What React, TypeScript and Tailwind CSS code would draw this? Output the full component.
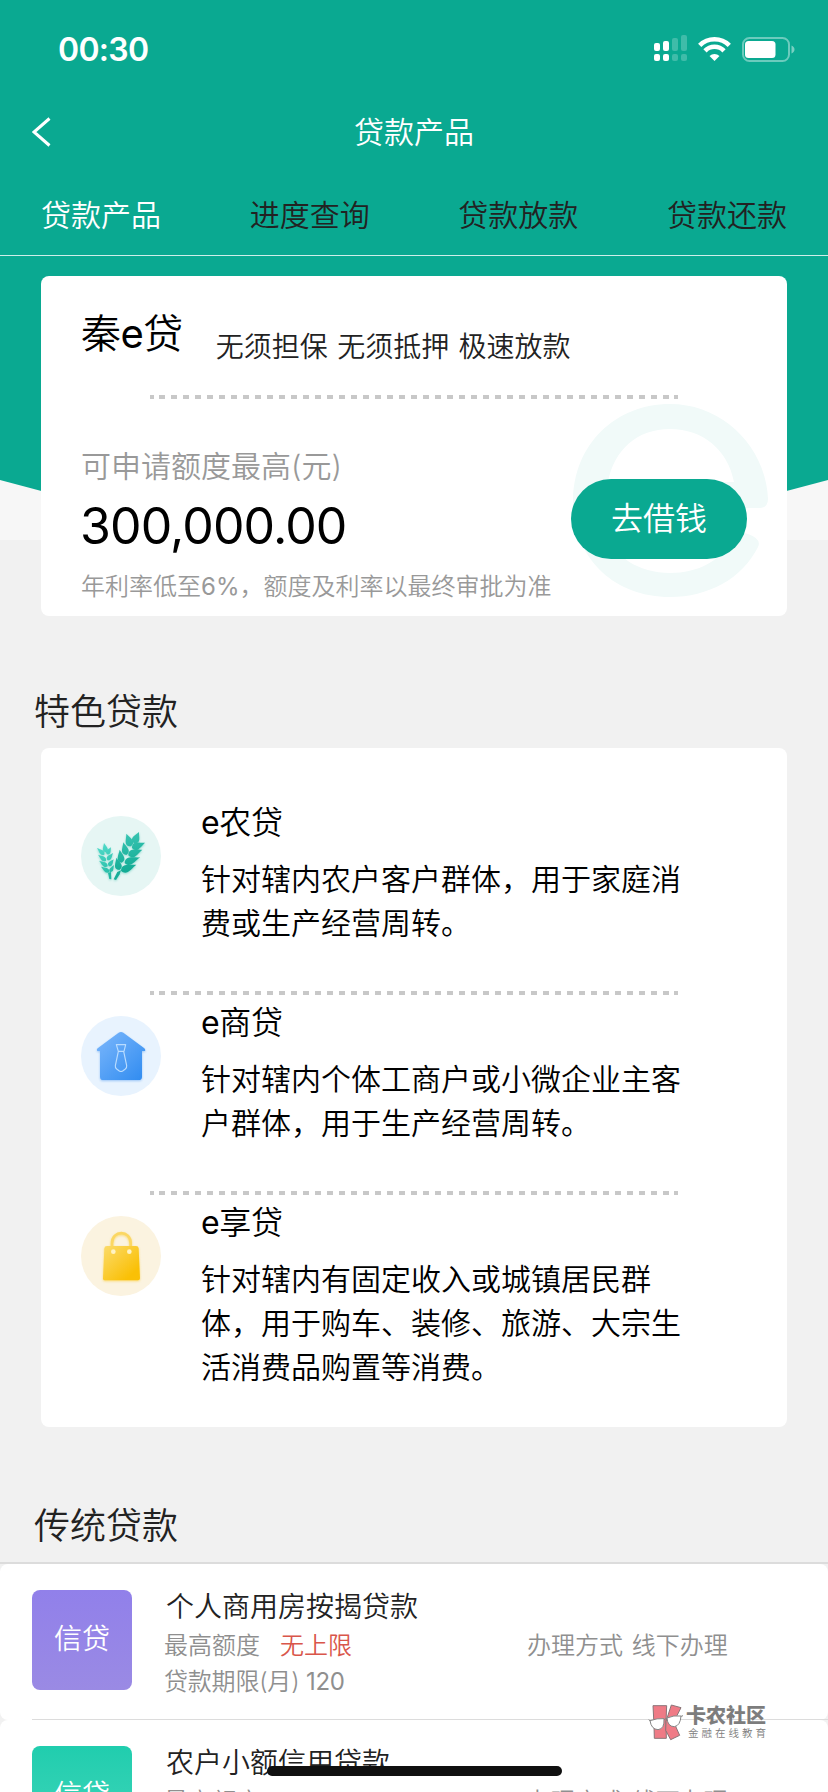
import type { ReactNode } from 'react'

const tabs = ['贷款产品', '进度查询', '贷款放款', '贷款还款']

interface Feature {
  name: string
  desc: string
  bg: string
  icon: ReactNode
}

interface Loan {
  name: string
  limit: string
  months: string
  method: string
  tile: string
}

// [tipX, tipY, baseX, baseY, halfWidth]
const leftGrains = [
  [69, 81, 75, 109, 8],
  [48, 96, 70, 116, 7],
  [51, 116, 75, 134, 7],
  [54, 134, 80, 151, 7],
  [60, 152, 85, 168, 7],
  [90, 94, 78, 115, 7],
  [96, 111, 79, 132, 7],
  [98, 130, 83, 150, 7],
  [99, 147, 87, 168, 6],
]

const rightGrains = [
  [174, 48, 159, 82, 12],
  [136, 53, 150, 91, 12],
  [127, 79, 136, 117, 11],
  [116, 101, 122, 140, 11],
  [106, 125, 115, 162, 11],
  [192, 80, 153, 96, 12],
  [184, 101, 142, 118, 12],
  [177, 124, 131, 141, 12],
  [166, 146, 120, 164, 12],
]

function grainPath([tx, ty, bx, by, w]: number[]) {
  const dx = bx - tx
  const dy = by - ty
  const len = Math.hypot(dx, dy)
  const nx = (-dy / len) * w
  const ny = (dx / len) * w
  const at = (t: number, s: number) => `${tx + dx * t + nx * s} ${ty + dy * t + ny * s}`
  return `M${tx} ${ty}C${at(0.4, 0.5)} ${at(0.8, 1.8)} ${bx} ${by}C${at(0.8, -1.8)} ${at(0.4, -0.5)} ${tx} ${ty}Z`
}

function WheatIcon() {
  return (
    <svg viewBox="0 0 240 240" className="size-20 drop-shadow-[0_1px_1px_rgba(20,180,155,0.4)]">
      <defs>
        <linearGradient id="wheatL" gradientUnits="userSpaceOnUse" x1="50" y1="85" x2="95" y2="185">
          <stop stopColor="#52dccb" />
          <stop offset="1" stopColor="#22b8a2" />
        </linearGradient>
        <linearGradient id="wheatR" gradientUnits="userSpaceOnUse" x1="130" y1="55" x2="160" y2="180">
          <stop stopColor="#38c4b2" />
          <stop offset="1" stopColor="#0ca78f" />
        </linearGradient>
      </defs>
      {leftGrains.map((g, i) => <path key={i} d={grainPath(g)} fill="url(#wheatL)" />)}
      {rightGrains.map((g, i) => <path key={i} d={grainPath(g)} fill="url(#wheatR)" />)}
      <path d="M81 170l9-2 1 22-6-1z" fill="#22b8a2" />
      <path d="M109 168l11-5-4 12-11 17-7-2z" fill="#16ae98" />
    </svg>
  )
}

function HouseIcon() {
  return (
    <svg viewBox="0 0 240 240" className="size-20 drop-shadow-[0_1px_1px_rgba(60,145,240,0.45)]">
      <defs>
        <linearGradient id="house" x1="0" y1="0" x2="1" y2="1">
          <stop stopColor="#7db8fc" />
          <stop offset="1" stopColor="#2f8bf0" />
        </linearGradient>
      </defs>
      <path d="M113 50q7-4 14 0l63 47q4 4 2 8h-9v77q0 10-10 10H67q-10 0-10-10v-77h-8q-3-4 1-8z" fill="url(#house)" />
      <path d="M106 86h28l-5 20h-17zM112 106l-9 43q-1 6 4 10l8 6q5 3 10 0l8-6q5-4 4-10l-9-43" fill="none" stroke="#b9dcff" strokeWidth="3.5" strokeLinejoin="round" />
    </svg>
  )
}

function BagIcon() {
  return (
    <svg viewBox="0 0 240 240" className="size-20 drop-shadow-[0_1px_1px_rgba(250,195,10,0.5)]">
      <defs>
        <linearGradient id="bag" x1="0" y1="0" x2="1" y2="1">
          <stop stopColor="#fbdb6c" />
          <stop offset="0.8" stopColor="#fac006" />
        </linearGradient>
      </defs>
      <path d="M93 96V82c0-41 56-41 56 0v14" fill="none" stroke="#fbd764" strokeWidth="8" />
      <path d="M78 90h87q7 0 8 7l4 90q0 6-6 6H71q-6 0-5-6l4-90q1-7 8-7z" fill="url(#bag)" />
      <circle cx="97" cy="107" r="7" fill="#fff3c4" />
      <circle cx="145" cy="107" r="7" fill="#fff3c4" />
    </svg>
  )
}

const features: Feature[] = [
  {
    name: '农贷',
    desc: '针对辖内农户客户群体，用于家庭消费或生产经营周转。',
    bg: 'bg-[#e6f6f4]',
    icon: <WheatIcon />,
  },
  {
    name: '商贷',
    desc: '针对辖内个体工商户或小微企业主客户群体，用于生产经营周转。',
    bg: 'bg-[#e8f3fe]',
    icon: <HouseIcon />,
  },
  {
    name: '享贷',
    desc: '针对辖内有固定收入或城镇居民群体，用于购车、装修、旅游、大宗生活消费品购置等消费。',
    bg: 'bg-[#fbf3e0]',
    icon: <BagIcon />,
  },
]

const loans: Loan[] = [
  { name: '个人商用房按揭贷款', limit: '无上限', months: '120', method: '线下办理', tile: 'bg-linear-to-b from-[#9180ea] to-[#9a8ae4]' },
  { name: '农户小额信用贷款', limit: '300000', months: '36', method: '线下办理', tile: 'bg-linear-to-b from-[#20cdae] to-[#3ed6ba]' },
]

function StatusIcons() {
  return (
    <svg width="144" height="30" viewBox="0 0 144 30" fill="#fff">
      <rect x="1" y="9" width="6" height="8" rx="2" />
      <rect x="10" y="7" width="6" height="10" rx="2" />
      <rect x="19" y="4" width="6" height="13" rx="2" opacity=".22" />
      <rect x="28" y="1" width="6" height="16" rx="2" opacity=".22" />
      <rect x="1" y="20" width="6" height="7" rx="2" />
      <rect x="10" y="20" width="6" height="7" rx="2" />
      <rect x="19" y="20" width="6" height="7" rx="2" opacity=".22" />
      <rect x="28" y="20" width="6" height="7" rx="2" opacity=".22" />
      <g fill="none" stroke="#fff" strokeWidth="4.6">
        <path d="M46.700 11.300a21 21 0 0 1 29.600 0" />
        <path d="M52 16.800a13.300 13.300 0 0 1 19 0" />
      </g>
      <path d="M56.500 22a7.500 7.500 0 0 1 10 0L61.500 27z" />
      <rect x="90" y="4" width="46" height="23" rx="6.500" fill="none" stroke="#fff" strokeWidth="2" opacity=".4" />
      <rect x="92" y="7" width="30.500" height="17" rx="3.500" />
      <path d="M138.500 11.500c4 1.500 4 6.500 0 8z" opacity=".45" />
    </svg>
  )
}

function DashedLine() {
  return (
    <div className="mx-auto h-1 w-[528px] border-x-4 border-[#c8c8c8] bg-[repeating-linear-gradient(90deg,transparent_0_5px,#c8c8c8_5px_11px,transparent_11px_12px)]" />
  )
}

function FeatureItem({ item }: { item: Feature }) {
  return (
    <div className="flex pl-10">
      <div className={`mt-[25px] size-20 shrink-0 rounded-full ${item.bg}`}>{item.icon}</div>
      <div className="ml-10 w-[486px]">
        <h3 className="mt-2.5 h-11 text-[32px] leading-[44px] font-[350] tracking-[-0.3px]">
          <span className="font-normal">e</span>{item.name}
        </h3>
        <p className="mt-3 text-[30px] leading-[44px]">{item.desc}</p>
      </div>
    </div>
  )
}

function LoanRow({ loan }: { loan: Loan }) {
  return (
    <div className="h-[156px] shrink-0 rounded-lg bg-white pl-8">
      <div className="flex h-[156px] border-b border-[#dcdcdc] pt-[26px]">
        <div className={`flex size-[100px] shrink-0 items-center justify-center rounded-lg text-[28px] leading-none text-white ${loan.tile}`}>
          <span className="-mt-0.5">信贷</span>
        </div>
        <div className="ml-8 w-[363px] text-2xl leading-9 text-[#8f8f8f]">
          <h3 className="ml-0.5 h-[38px] pt-px text-[28px] leading-8 font-[350] text-[#222]">{loan.name}</h3>
          <p>
            最高额度<span className="ml-5 text-[#d9564a]">{loan.limit}</span>
          </p>
          <p className="tracking-[-0.2px]">
            贷款期限(月) <span className="font-normal">{loan.months}</span>
          </p>
        </div>
        <p className="mt-[38px] text-2xl leading-9 text-[#8f8f8f] [word-spacing:2px]">办理方式 {loan.method}</p>
      </div>
    </div>
  )
}

function Watermark() {
  return (
    <div className="absolute top-[1704px] left-[648px] flex">
      <svg width="36" height="37" viewBox="0 0 108 111">
        <g fill="#ef7b86" stroke="#8b7578" strokeWidth="3" strokeLinejoin="round">
          <path d="M15 5h41l-2 50 1 48H19l-1-40z" />
          <path d="M70 3l29 8-22 43 18 40-27 13-15-28 1-27z" />
        </g>
        <g fill="#fff" stroke="#858585" strokeWidth="3">
          <path d="M6 50q22-8 42-6 2 31-18 33Q10 76 6 50zM57 42q20-9 42-6-2 29-20 32-20 0-22-26z" />
          <path d="M2 47l5 4M48 47l9-5M99 37l6-2" fill="none" />
        </g>
      </svg>
      <div className="ml-0.5 text-[#7d7d7d]">
        <p className="mt-0.5 text-[20px] leading-[20px] font-black">卡农社区</p>
        <p className="mt-0.5 ml-0.5 text-[10.500px] leading-[12px] tracking-[3px]">金融在线教育</p>
      </div>
    </div>
  )
}

export default function App() {
  return (
    <div className="relative h-[1792px] w-[828px] overflow-hidden bg-[#f1f1f1] font-[Inter,'Noto_Sans_CJK_SC',sans-serif] font-[350] text-black">
      <div className="absolute inset-x-0 top-0 h-[540px] bg-[#f7f7f7]">
        <div className="h-full bg-[#0aa991] [clip-path:polygon(0_0,100%_0,100%_480px,90%_502px,10%_502px,0_480px)]" />
      </div>

      <div className="relative">
        <header className="text-white">
          <div className="flex h-[88px] items-start justify-between pr-[31px] pl-[58px]">
            <span className="mt-[30px] text-[32px] leading-10 font-semibold tracking-[-0.7px]">00:30</span>
            <span className="mt-[34px]"><StatusIcons /></span>
          </div>
          <div className="grid h-[88px] grid-cols-[1fr_auto_1fr] items-center pl-8">
            <svg width="20" height="30" viewBox="0 0 20 30" fill="none" stroke="#fff" strokeWidth="3">
              <path d="M17.500 1.500L2 15l15.500 13.500" />
            </svg>
            <h1 className="-ml-8 text-[30px] leading-10 font-[350]">贷款产品</h1>
          </div>
          <nav className="flex h-20 items-center justify-between border-b border-white/80 px-[41px] pb-0.5 text-[30px] leading-10">
            {tabs.map((tab, i) => (
              <span key={tab} className={i === 0 ? 'text-white' : 'text-[#222]'}>{tab}</span>
            ))}
          </nav>
        </header>

        <section className="relative mx-[41px] mt-5 h-[340px] overflow-hidden rounded-lg bg-white pt-[34px]">
          <svg className="absolute top-[128px] left-[531px]" width="198" height="196" viewBox="0 0 198 196">
            <path
              d="M1 98C1 40 44 0 98 0s96 44 98 95q0 9-9 9H34v24c8 25 33 41 64 41 28 0 50-12 61-32 5-8 11-9 17-7q14 5 10 13c-16 32-50 50-88 50C42 193 1 154 1 98zM36 78h126c-6-32-31-53-64-53S42 46 36 78z"
              fill="#f1faf9"
            />
          </svg>
          <div className="relative">
            <div className="flex h-[85px] pl-10">
              <h2 className="text-[40px] leading-[48px] font-[350] tracking-[-0.5px]">
                秦<span className="font-normal">e</span>贷
              </h2>
              <p className="mt-[17px] ml-[33px] text-[28px] leading-10 text-[#222] [word-spacing:1.5px]">无须担保 无须抵押 极速放款</p>
            </div>
            <DashedLine />
            <div className="flex justify-between pr-10 pl-10">
              <div>
                <p className="mt-[47px] text-[30px] leading-10 text-[#999]">可申请额度最高(元)</p>
                <p className="mt-2 -ml-px text-[50px] leading-[64px] font-normal tracking-[-0.9px]">300,000.00</p>
                <p className="mt-[11px] text-2xl leading-9 whitespace-nowrap text-[#999]">
                  年利率低至<span className="font-normal">6%</span>，额度及利率以最终审批为准
                </p>
              </div>
              <button className="mt-20 h-20 w-44 shrink-0 rounded-full bg-[#0aa991] text-[32px] leading-none text-white">去借钱</button>
            </div>
          </div>
        </section>

        <h2 className="mt-[71px] h-[61px] pl-[34px] text-[36px] leading-[50px] font-[350] text-[#222]">特色贷款</h2>
        <section className="mx-[41px] h-[679px] rounded-lg bg-white pt-[43px]">
          {features.map((item, i) => (
            <div key={item.name} className="h-[200px]">
              <FeatureItem item={item} />
              {i < features.length - 1 && <div className="mt-[46px]"><DashedLine /></div>}
            </div>
          ))}
        </section>

        <h2 className="mt-[74px] h-[61px] pl-[34px] text-[36px] leading-[50px] font-[350] text-[#222]">传统贷款</h2>
        <section className="border-t-2 border-[#dcdcdc]">
          {loans.map((loan) => (
            <LoanRow key={loan.name} loan={loan} />
          ))}
        </section>
      </div>

      <Watermark />
      <div className="absolute top-[1766px] left-[267px] h-2.5 w-[295px] rounded-full bg-[#101010]" />
    </div>
  )
}
